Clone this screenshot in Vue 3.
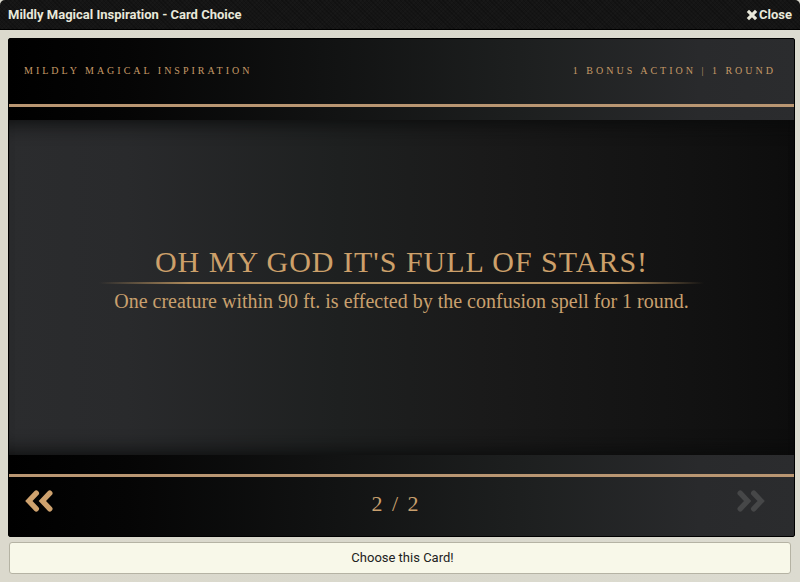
<script setup>
import { ref, computed } from 'vue'

const open = ref(true)
const cards = [
  { title: 'Inspiration', text: 'Draw a card to inspire an ally.' },
  {
    title: "Oh my god it's full of stars!",
    text: 'One creature within 90 ft. is effected by the confusion spell for 1 round.'
  }
]
const index = ref(1)
const card = computed(() => cards[index.value])
</script>

<template>
  <main v-if="open" class="dialog">
    <header class="titlebar">
      <h1>Mildly Magical Inspiration - Card Choice</h1>
      <button type="button" class="close" @click="open = false">
        <svg viewBox="0 0 12 12" aria-hidden="true">
          <path d="M1.9 1.9 10.1 10.1M10.1 1.9 1.9 10.1" />
        </svg>
        Close
      </button>
    </header>

    <section class="content">
      <article class="card">
        <header class="card-head">
          <span>Mildly Magical Inspiration</span>
          <span>1 Bonus Action | 1 Round</span>
        </header>
        <div class="strip"></div>
        <div class="card-body">
          <h2>{{ card.title }}</h2>
          <div class="rule"></div>
          <p>{{ card.text }}</p>
        </div>
        <div class="strip low"></div>
        <footer class="card-foot">
          <button type="button" class="nav" aria-label="Previous card" :disabled="index === 0" @click="index--">
            <svg viewBox="0 0 30 24" aria-hidden="true">
              <path d="M12.3 4.2 4.9 12l7.4 7.8M25.8 4.2 18.4 12l7.4 7.8" />
            </svg>
          </button>
          <span class="count">{{ index + 1 }} / {{ cards.length }}</span>
          <button type="button" class="nav" aria-label="Next card" :disabled="index === cards.length - 1" @click="index++">
            <svg viewBox="0 0 30 24" aria-hidden="true">
              <path d="M4.2 4.2 11.6 12l-7.4 7.8M17.7 4.2 25.1 12l-7.4 7.8" />
            </svg>
          </button>
        </footer>
      </article>
      <button type="button" class="choose">Choose this Card!</button>
    </section>
  </main>
</template>

<style>
body {
  margin: 0;
  background: #dad9cd;
}
</style>

<style scoped>
.dialog {
  box-sizing: border-box;
  min-height: 100vh;
  display: flex;
  flex-direction: column;
  font-family: Roboto, "Open Sans", sans-serif;
  background: linear-gradient(90deg, #dbd9cd, #d9d8cc 50%, #dcdbd0);
}
.titlebar {
  box-sizing: border-box;
  height: 30px;
  padding: 0 8px;
  display: flex;
  align-items: center;
  justify-content: space-between;
  color: #e8e8da;
  border-bottom: 1px solid #000;
  border-radius: 5px 5px 0 0;
  background:
    repeating-linear-gradient(45deg, rgba(0, 0, 0, 0.2) 0 1px, transparent 1px 3px),
    repeating-linear-gradient(135deg, #181818 0 1px, #151515 1px 3px);
}
h1 {
  margin: 0;
  font-size: 13px;
  font-weight: 700;
}
button {
  font-family: inherit;
  cursor: pointer;
}
.close {
  display: flex;
  align-items: center;
  gap: 1px;
  padding: 0;
  border: 0;
  background: none;
  color: inherit;
  font-size: 13px;
  font-weight: 700;
}
.close svg {
  width: 12px;
  height: 12px;
  fill: none;
  stroke: currentColor;
  stroke-width: 3.2;
}
.content {
  flex: 1;
  display: flex;
  flex-direction: column;
  padding: 8px 5px 8px 8px;
}
.card {
  flex: 1;
  display: flex;
  flex-direction: column;
  border: 1px solid #000;
  border-radius: 2px;
  color: #c9a06e;
  font-family: "Liberation Serif", serif;
  background: linear-gradient(90deg, #000, #050505 15%, #111212 40%, #1d1f1f 65%, #292a2c 88%, #2b2c2e);
}
.card-head {
  display: flex;
  justify-content: space-between;
  padding: 24px 18px 26px 15px;
  font-size: 10px;
  line-height: 15px;
  letter-spacing: 3px;
  text-transform: uppercase;
  color: #c69a67;
  border-bottom: 3px solid #b99672;
}
.strip {
  height: 13px;
}
.strip.low {
  height: 19px;
}
.card-body {
  flex: 1;
  display: flex;
  flex-direction: column;
  align-items: center;
  justify-content: center;
  padding-bottom: 18px;
  text-align: center;
  background: linear-gradient(90deg, #2b2c2e, #292a2c 15%, #1e2020 42%, #1a1a1a 60%, #111 90%, #0d0d0d);
  box-shadow: inset 0 20px 20px -18px #090a0a, inset 0 -20px 20px -18px #090a0a;
}
h2 {
  margin: 0;
  font-size: 30px;
  line-height: 40px;
  font-weight: 400;
  letter-spacing: 1px;
  text-transform: uppercase;
  color: #cda06a;
}
.rule {
  width: 77%;
  height: 2px;
  background: linear-gradient(90deg, transparent, #b08c5c 15%, #b99866 50%, #b08c5c 85%, transparent);
}
p {
  margin: 3px 0 0;
  font-size: 20px;
  line-height: 28px;
}
.card-foot {
  display: flex;
  align-items: center;
  justify-content: space-between;
  padding: 10px 28px 20px 15px;
  border-top: 3px solid #b99672;
}
.nav {
  display: flex;
  padding: 0 0 1px;
  border: 0;
  background: none;
  color: #cfa26e;
}
.nav:disabled {
  color: #464748;
  cursor: default;
}
.nav svg {
  width: 30px;
  height: 24px;
  fill: none;
  stroke: currentColor;
  stroke-width: 5.4;
  stroke-linecap: round;
  stroke-linejoin: miter;
}
.count {
  padding: 4px 0 0 2px;
  font-size: 22px;
  line-height: 25px;
  letter-spacing: 2px;
}
.choose {
  margin: 5px 4px 0 1px;
  padding: 6px 6px 6px 11px;
  border: 1px solid #b5b3a4;
  border-radius: 3px;
  background: #f8f8e9;
  color: #222;
  font-size: 13px;
  line-height: 18px;
}
</style>
